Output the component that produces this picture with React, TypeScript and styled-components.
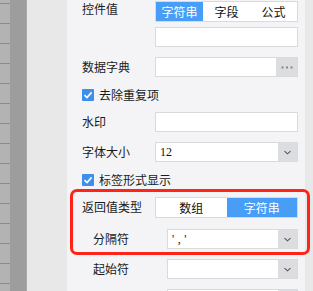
import React from "react";
import styled, { createGlobalStyle } from "styled-components";

const Global = createGlobalStyle`
  html, body { margin: 0; padding: 0; overflow: hidden; }
  body { font-family: "Noto Sans CJK SC", "Noto Sans", sans-serif; font-size: 12px; color: #1a1a1a; }
`;

const Shell = styled.div`
  display: flex;
  width: 313px;
  height: 291px;
  overflow: hidden;
`;

const RulerStrip = styled.div`
  width: 10px;
  flex: none;
  background: repeating-linear-gradient(
    to bottom,
    #b3b3b3 0px,
    #b3b3b3 3px,
    #8c8c8c 3px,
    #8c8c8c 4px,
    #b3b3b3 4px,
    #b3b3b3 20px
  );
`;

const DarkStrip = styled.div`
  width: 16px;
  flex: none;
  background: #9d9d9d;
  border-right: 1px solid #a9a9a9;
`;

const Gutter = styled.div`
  width: 40px;
  flex: none;
  background: #e8e8e8;
`;

const Panel = styled.div`
  width: 238px;
  flex: none;
  box-sizing: border-box;
  background: #f4f4f6;
  padding: 0 7px 0 15px;
  display: flex;
  flex-direction: column;
`;

const ScrollTrack = styled.div`
  flex: 1;
  background: #e8e8e8;
`;

const Row = styled.div<{ $h: number; $indent?: number; $align?: string; $pt?: number }>`
  display: flex;
  align-items: ${(p) => p.$align || "center"};
  height: ${(p) => p.$h}px;
  flex: none;
  box-sizing: border-box;
  padding-left: ${(p) => p.$indent || 0}px;
  padding-top: ${(p) => p.$pt || 0}px;
`;

const Label = styled.div<{ $w: number; $dy?: number }>`
  width: ${(p) => p.$w}px;
  flex: none;
  font-size: 12px;
  line-height: 16px;
  white-space: nowrap;
  position: relative;
  top: ${(p) => p.$dy || 0}px;
`;

const Segmented = styled.div`
  flex: 1;
  display: flex;
  height: 21px;
  box-sizing: border-box;
  border: 1px solid #dadada;
  background: #fff;
`;

const Segment = styled.div<{ $active?: boolean }>`
  flex: 1;
  display: flex;
  align-items: center;
  justify-content: center;
  font-size: 12px;
  background: ${(p) => (p.$active ? "#489ef6" : "#fff")};
  color: ${(p) => (p.$active ? "#fff" : "#111")};
`;

const Field = styled.div`
  flex: 1;
  display: flex;
  height: 20px;
  box-sizing: border-box;
  border: 1px solid #dadada;
  background: #fff;
`;

const FieldText = styled.div<{ $ls?: number }>`
  flex: 1;
  display: flex;
  align-items: center;
  padding-left: 4px;
  font-family: "Liberation Serif", serif;
  font-size: 12px;
  letter-spacing: ${(p) => p.$ls || 0}px;
  color: #111;
`;

const SideButton = styled.div<{ $w: number }>`
  width: ${(p) => p.$w}px;
  flex: none;
  display: flex;
  align-items: center;
  justify-content: center;
  background: #dcdde0;
`;

const CheckRow = styled.div`
  display: flex;
  align-items: center;
  height: 25px;
  flex: none;
  gap: 5px;
`;

const Box = styled.div`
  width: 12px;
  height: 12px;
  border-radius: 1px;
  background: #3d8fee;
  display: flex;
  align-items: center;
  justify-content: center;
`;

const Highlight = styled.div`
  position: relative;
  display: flex;
  flex-direction: column;
`;

const RedFrame = styled.div`
  position: absolute;
  left: -12px;
  right: -12px;
  top: -3px;
  bottom: -1px;
  border: 3px solid #ff2318;
  border-radius: 7px;
  z-index: 2;
  pointer-events: none;
`;

const Chevron = () => (
  <svg width="9" height="5" viewBox="0 0 9 5">
    <path d="M1.5 1.2 L4.5 3.8 L7.5 1.2" fill="none" stroke="#555" strokeWidth="1.1" />
  </svg>
);

const Dots = () => (
  <svg width="12" height="3" viewBox="0 0 12 3">
    <rect x="0.5" y="0.5" width="2" height="2" fill="#888" />
    <rect x="5" y="0.5" width="2" height="2" fill="#888" />
    <rect x="9.5" y="0.5" width="2" height="2" fill="#888" />
  </svg>
);

const Check = () => (
  <svg width="10" height="10" viewBox="0 0 10 10">
    <path d="M1.5 5.2 L4 7.6 L8.6 2.4" fill="none" stroke="#fff" strokeWidth="1.6" />
  </svg>
);

const Select = ({ text, ls }: { text?: string; ls?: number }) => (
  <Field>
    <FieldText $ls={ls}>{text}</FieldText>
    <SideButton $w={19}>
      <Chevron />
    </SideButton>
  </Field>
);

export default function App() {
  return (
    <>
      <Global />
      <Shell>
        <RulerStrip />
        <DarkStrip />
        <Gutter />
        <Panel>
          <Row $h={22} $align="flex-end">
            <Label $w={73} $dy={-5}>控件值</Label>
            <Segmented>
              <Segment $active>字符串</Segment>
              <Segment>字段</Segment>
              <Segment>公式</Segment>
            </Segmented>
          </Row>
          <Row $h={30}>
            <Label $w={73} />
            <Field />
          </Row>
          <Row $h={30}>
            <Label $w={73}>数据字典</Label>
            <Field>
              <FieldText />
              <SideButton $w={21}>
                <Dots />
              </SideButton>
            </Field>
          </Row>
          <CheckRow>
            <Box>
              <Check />
            </Box>
            <span>去除重复项</span>
          </CheckRow>
          <Row $h={30}>
            <Label $w={73}>水印</Label>
            <Field />
          </Row>
          <Row $h={30}>
            <Label $w={73}>字体大小</Label>
            <Select text="12" />
          </Row>
          <CheckRow>
            <Box>
              <Check />
            </Box>
            <span>标签形式显示</span>
          </CheckRow>
          <Highlight>
            <RedFrame />
            <Row $h={32} $align="flex-start" $pt={5}>
              <Label $w={73} $dy={2}>返回值类型</Label>
              <Segmented>
                <Segment>数组</Segment>
                <Segment $active>字符串</Segment>
              </Segmented>
            </Row>
            <Row $h={30} $indent={11}>
              <Label $w={74}>分隔符</Label>
              <Select text="','" ls={3.5} />
            </Row>
          </Highlight>
          <Row $h={30} $indent={11}>
            <Label $w={74}>起始符</Label>
            <Select />
          </Row>
          <Row $h={30} $indent={11}>
            <Label $w={74} />
            <Select />
          </Row>
        </Panel>
        <ScrollTrack />
      </Shell>
    </>
  );
}
